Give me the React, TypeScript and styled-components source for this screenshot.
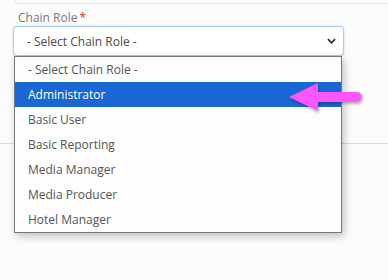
import styled, { createGlobalStyle } from 'styled-components'

const GlobalStyle = createGlobalStyle`
  html, body {
    margin: 0;
    padding: 0;
    background: #fcfcfc;
    font-family: 'Open Sans', 'Liberation Sans', sans-serif;
  }
`

const RoleOptions = [
  '- Select Chain Role -',
  'Administrator',
  'Basic User',
  'Basic Reporting',
  'Media Manager',
  'Media Producer',
  'Hotel Manager',
]

const SELECTED = 1

const ArrowIcon = () => (
  <svg width="82" height="40" viewBox="0 0 82 40">
    <defs>
      <filter id="arrowShadow" x="-20%" y="-30%" width="140%" height="170%">
        <feDropShadow dx="1" dy="2" stdDeviation="1.5" floodColor="#000" floodOpacity="0.3" />
      </filter>
    </defs>
    <path
      d="M4 17 L33 3 L33 12 L72 12 A5 5 0 0 1 72 22 L33 22 L33 31 Z"
      fill="#ff55ff"
      filter="url(#arrowShadow)"
    />
  </svg>
)

const App = () => {
  return (
    <>
      <GlobalStyle />
      <Page>
        <TopCard />
        <FormGroup>
          <Label>
            Chain Role<Required>*</Required>
          </Label>
          <SelectBox>
            <SelectText>- Select Chain Role -</SelectText>
            <Chevron viewBox="0 0 10 6">
              <path d="M1 1 L5 5 L9 1" fill="none" stroke="#333" strokeWidth="2" />
            </Chevron>
          </SelectBox>
          <OptionList>
            {RoleOptions.map((role, index) => (
              <OptionItem key={role} $active={index === SELECTED}>
                {role}
              </OptionItem>
            ))}
          </OptionList>
          <Pointer>
            <ArrowIcon />
          </Pointer>
        </FormGroup>
        <Divider />
      </Page>
    </>
  )
}

const Page = styled.div`
  width: 388px;
  height: 280px;
  overflow: hidden;
  background: #fcfcfc;
`

const TopCard = styled.div`
  margin-left: 14px;
  height: 3px;
  border-left: 1px solid #e3e3e3;
  border-bottom: 1px solid #e3e3e3;
  border-bottom-left-radius: 4px;
`

const FormGroup = styled.div`
  position: relative;
  padding: 6px 0 0 13px;
  width: 331px;
`

const Label = styled.div`
  font-size: 12px;
  line-height: 16px;
  color: #7a7a7a;
  padding-left: 5px;
`

const Required = styled.span`
  color: #e8262a;
  margin-left: 2px;
`

const SelectBox = styled.div`
  display: flex;
  align-items: center;
  justify-content: space-between;
  box-sizing: border-box;
  height: 30px;
  padding: 0 7px 0 13px;
  border: 1.5px solid #a9cdf3;
  border-radius: 4px;
  background: #fff;
  box-shadow: 0 0 2px rgba(120, 170, 230, 0.5);
`

const SelectText = styled.span`
  font-size: 12px;
  color: #4a4a4a;
`

const Chevron = styled.svg`
  width: 9px;
  height: 6px;
`

const OptionList = styled.div`
  position: absolute;
  top: 52px;
  left: 14px;
  width: 328px;
  box-sizing: border-box;
  border: 1px solid #777;
  background: #fdfdfd;
  box-shadow: 2px 3px 8px rgba(0, 0, 0, 0.25);
  z-index: 2;
`

const OptionItem = styled.div<{ $active?: boolean }>`
  height: 25px;
  line-height: 25px;
  padding-left: 13px;
  font-size: 12px;
  color: ${(p) => (p.$active ? '#fff' : '#555')};
  background: ${(p) => (p.$active ? '#1967d2' : 'transparent')};
`

const Pointer = styled.div`
  position: absolute;
  top: 76px;
  left: 285px;
  z-index: 3;
`

const Divider = styled.div`
  margin-top: 87px;
  border-top: 1px solid #dcdcdc;
`

export default App
